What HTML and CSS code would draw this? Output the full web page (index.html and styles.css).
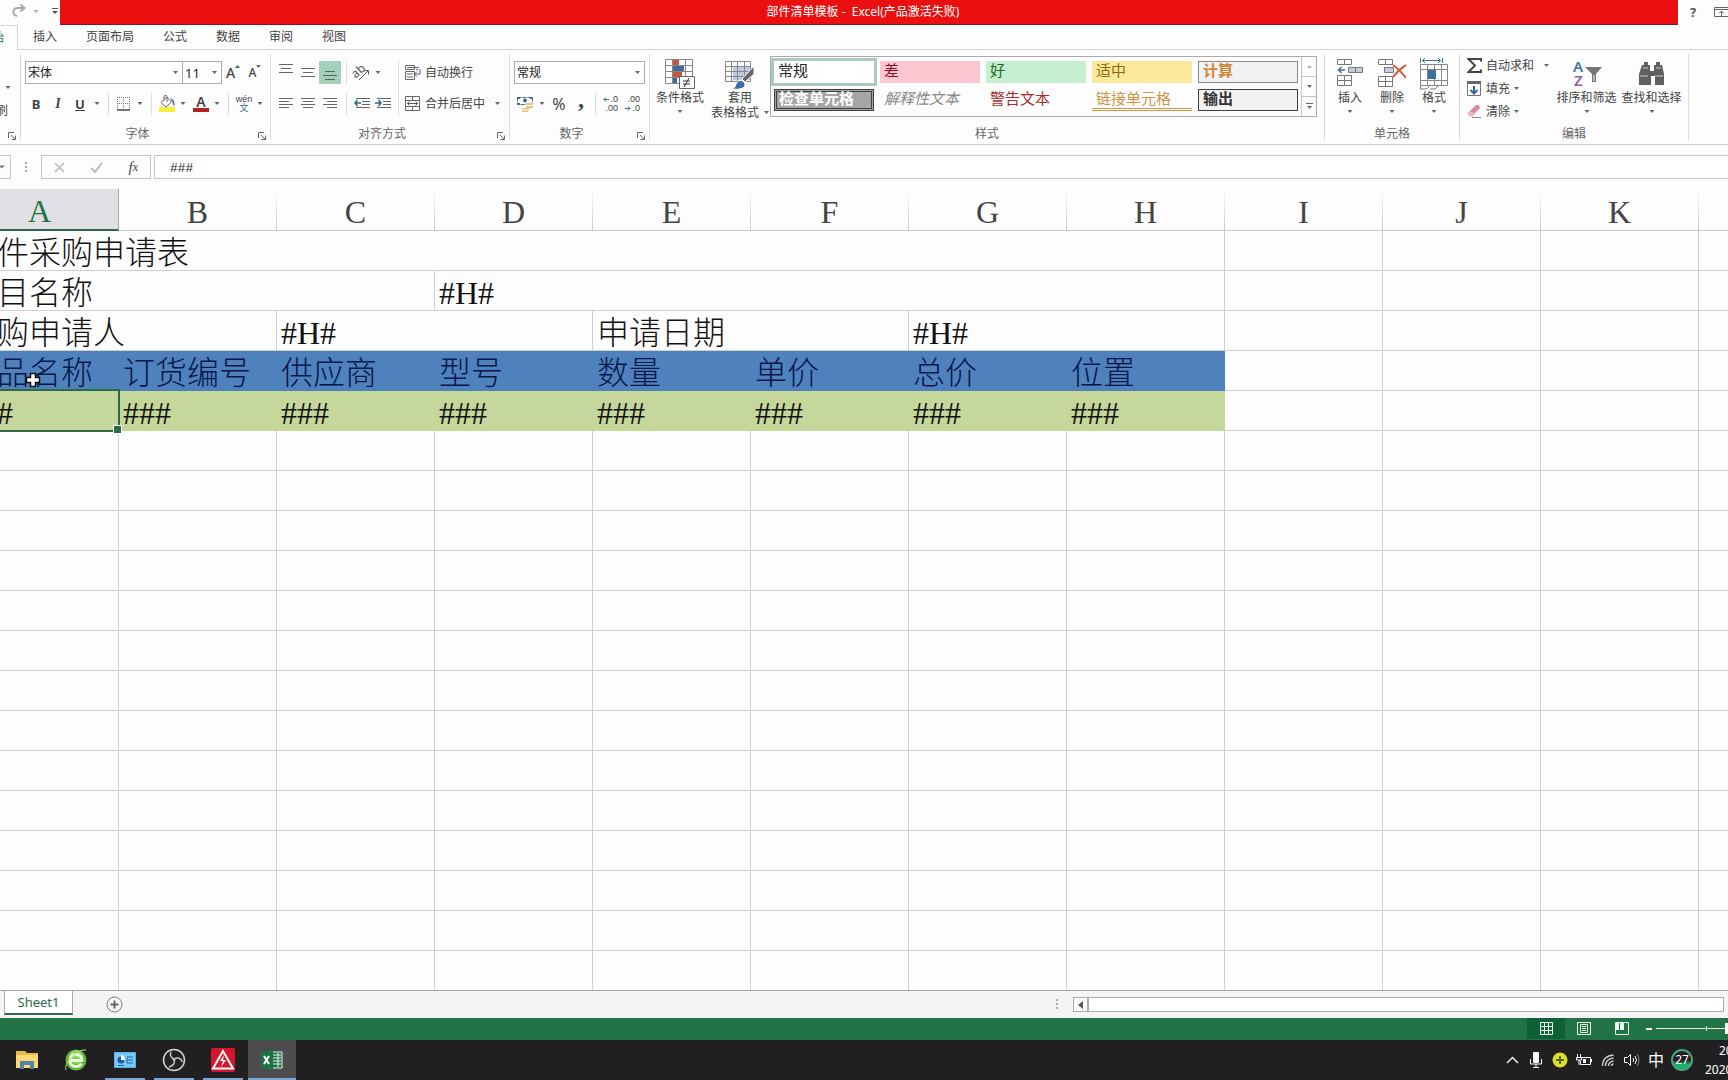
FILE: index.html
```html
<!DOCTYPE html>
<html lang="zh-CN">
<head>
<meta charset="utf-8">
<title>部件清单模板 - Excel</title>
<link rel="stylesheet" href="styles.css">
</head>
<body>
<svg class="defs" aria-hidden="true">
  <symbol id="caret" viewBox="0 0 5 3"><path d="M0 0h5L2.500 3z" fill="#666"/></symbol>
  <symbol id="launch" viewBox="0 0 8 8"><path d="M.5 6V.5H6M3 3l4 4M7.500 3.500v4h-4" fill="none" stroke="#666"/></symbol>
</svg>

<header class="titlebar">
  <div class="quick">
    <button class="plain" aria-label="恢复"><svg width="14" height="14" viewBox="0 0 14 14"><path d="M5 12C0 11 0 4 6 4h6M8.500 0.500L12.500 4L8.500 7.500" fill="none" stroke="#aaa" stroke-width="2"/></svg></button>
    <svg class="caret pale"><use href="#caret"/></svg>
    <button class="plain" aria-label="自定义快速访问工具栏"><svg width="6" height="6" viewBox="0 0 6 6"><path d="M0 .5h6" stroke="#555"/><path d="M0 3h6L3 6z" fill="#555"/></svg></button>
  </div>
  <h1 class="title">部件清单模板 -&nbsp; Excel(产品激活失败)</h1>
  <div class="window-tools">
    <button class="plain help" aria-label="帮助">?</button>
    <button class="plain" aria-label="功能区显示选项"><svg width="15" height="10" viewBox="0 0 15 10"><path d="M.5.5h14v9H.5zM.5 2.500h14M7.500 9V4M5 6.500L7.500 4L10 6.500" fill="none" stroke="#666"/></svg></button>
  </div>
</header>

<nav class="tabs">
  <a href="#home" class="tab current">开始</a>
  <a href="#insert" class="tab">插入</a>
  <a href="#layout" class="tab">页面布局</a>
  <a href="#formula" class="tab">公式</a>
  <a href="#data" class="tab">数据</a>
  <a href="#review" class="tab">审阅</a>
  <a href="#view" class="tab">视图</a>
</nav>

<section class="ribbon" aria-label="开始">
  <div class="group g-clip">
    <div class="clip-body"><svg class="caret"><use href="#caret"/></svg><button class="plain brush">格式刷</button></div>
    <div class="foot"><button class="plain launcher" aria-label="剪贴板选项"><svg width="8" height="8"><use href="#launch"/></svg></button></div>
  </div>

  <div class="group g-font">
    <div class="body col">
      <div class="row">
        <select class="combo c-font" aria-label="字体"><option>宋体</option></select>
        <select class="combo c-size" aria-label="字号"><option>11</option></select>
        <button class="tool wide big-a" aria-label="增大字号">A<svg width="5" height="3" viewBox="0 0 5 3"><path d="M0 3h5L2.500 0z" fill="#46637c"/></svg></button>
        <button class="tool wide small-a" aria-label="减小字号">A<svg width="5" height="3"><use href="#caret"/></svg></button>
      </div>
      <div class="row">
        <button class="tool b">B</button><button class="tool i">I</button><button class="tool u">U</button><svg class="caret"><use href="#caret"/></svg>
        <span class="sep"></span>
        <button class="tool slim" aria-label="边框"><svg width="14" height="14" viewBox="0 0 14 14"><path d="M.5 0v13M6.500 0v13M12.500 0v13M0 .5h13M0 6.500h13" stroke="#777" stroke-dasharray="1 1" fill="none"/><path d="M0 13h13" stroke="#444" stroke-width="1.500"/></svg></button><svg class="caret"><use href="#caret"/></svg>
        <span class="sep"></span>
        <button class="tool slim" aria-label="填充颜色"><svg width="18" height="17" viewBox="0 0 18 17"><path d="M1 12h16v5H1z" fill="#f8ee3e"/><path d="M3 7.500L8.500 2L13.500 7L8 12z" fill="#fff" stroke="#666"/><path d="M6 6V2q0-2 2-1.500T9 4v3" fill="none" stroke="#666"/><path d="M12 3q5 1 4.500 8q-2-1-2-4z" fill="#4b6d92"/></svg></button><svg class="caret"><use href="#caret"/></svg>
        <button class="tool slim after font-color" aria-label="字体颜色">A</button><svg class="caret"><use href="#caret"/></svg>
        <span class="sep"></span>
        <button class="tool slim wen" aria-label="拼音"><span>wén</span><span class="blue">文</span></button><svg class="caret"><use href="#caret"/></svg>
      </div>
    </div>
    <div class="foot"><span class="name">字体</span><button class="plain launcher" aria-label="字体选项"><svg width="8" height="8"><use href="#launch"/></svg></button></div>
  </div>

  <div class="group g-align">
    <div class="body">
      <div class="col align-left">
        <div class="row">
          <button class="tool top" aria-label="顶端对齐"><svg width="14" height="9"><path d="M0 .5h14M2 4.500h10M0 8.500h14" stroke="#666"/></svg></button>
          <button class="tool" aria-label="垂直居中"><svg width="14" height="9"><path d="M0 .5h14M2 4.500h10M0 8.500h14" stroke="#666"/></svg></button>
          <button class="tool bottom on" aria-label="底端对齐"><svg width="14" height="9"><path d="M2 .5h10M0 4.500h14M2 8.500h10" stroke="#4c6b5c"/></svg></button>
          <span class="sep"></span>
          <button class="tool slim" aria-label="方向"><svg class="spill" width="18" height="16" viewBox="0 0 18 16"><text x="0" y="11" font-size="12" font-family="Noto Sans" fill="#555" transform="rotate(-42 5 9)">ab</text><path d="M6 15L15 6M11.500 5.500H15.500V9.500" fill="none" stroke="#555"/></svg></button><svg class="caret"><use href="#caret"/></svg>
        </div>
        <div class="row">
          <button class="tool" aria-label="左对齐"><svg width="14" height="11"><path d="M0 .5h14M0 3.500h10M0 6.500h14M0 9.500h10" stroke="#666"/></svg></button>
          <button class="tool" aria-label="居中"><svg width="14" height="11"><path d="M0 .5h14M2 3.500h10M0 6.500h14M2 9.500h10" stroke="#666"/></svg></button>
          <button class="tool" aria-label="右对齐"><svg width="14" height="11"><path d="M0 .5h14M4 3.500h10M0 6.500h14M4 9.500h10" stroke="#666"/></svg></button>
          <span class="sep"></span>
          <button class="tool slim" aria-label="减少缩进量"><svg width="16" height="11"><path d="M2 .5h14M8 3.500h8M8 6.500h8M2 9.500h14" stroke="#666"/><path d="M7 5H1M3.500 2L1 5l2.500 3" fill="none" stroke="#2f6797" stroke-width="1.500"/></svg></button>
          <button class="tool" aria-label="增加缩进量"><svg width="16" height="11"><path d="M2 .5h14M8 3.500h8M8 6.500h8M2 9.500h14" stroke="#666"/><path d="M0 5h6M3.500 2L6 5L3.500 8" fill="none" stroke="#2f6797" stroke-width="1.500"/></svg></button>
        </div>
      </div>
      <div class="col align-right">
        <button class="text-tool"><svg width="16" height="16" viewBox="0 0 16 16"><path d="M.5.500h9v4h-9zM.5 6.500h9v8h-9zM2 9h6M2 12h6M2 2.500h12M11 4.500h2" fill="none" stroke="#666"/><path d="M15 4v5h-5M12 6.500L9.500 9l2.500 2.500" fill="none" stroke="#3f6b90"/></svg>自动换行</button>
        <button class="text-tool"><svg width="16" height="16" viewBox="0 0 16 16"><path d="M.5.5h14v14H.5zM.5 4.500h14M.5 10.500h14M7.500.5v4M7.500 10.500v4" fill="none" stroke="#666"/><path d="M2 7.500h11M4.500 5.500l-2 2l2 2M10.500 5.500l2 2l-2 2" fill="none" stroke="#555"/></svg>合并后居中<svg class="caret push"><use href="#caret"/></svg></button>
      </div>
    </div>
    <div class="foot"><span class="name">对齐方式</span><button class="plain launcher" aria-label="对齐选项"><svg width="8" height="8"><use href="#launch"/></svg></button></div>
  </div>

  <div class="group g-num">
    <div class="body col">
      <div class="row"><select class="combo c-num" aria-label="数字格式"><option>常规</option></select></div>
      <div class="row">
        <button class="tool" aria-label="会计数字格式"><svg width="17" height="16" viewBox="0 0 17 16"><path d="M.5 1.500h15v7H.5z" fill="#fff" stroke="#3e6c96" stroke-dasharray="4 1"/><path d="M0 1h3v2H0zM13 1h3v2h-3zM0 7h3v2H0z" fill="#3e6c96"/><circle cx="8" cy="4.500" r="2" fill="#3e6c96"/><path d="M9 7h7v2H9zM9 10h7v2H9zM5 12h7v1.500H5zM5 14.500h6V16H5z" fill="#e4c478"/></svg></button><svg class="caret"><use href="#caret"/></svg>
        <button class="tool pct">%</button>
        <button class="tool comma" aria-label="千位分隔">,</button>
        <span class="sep near"></span>
        <button class="tool dec" aria-label="增加小数位数"><span><svg width="6" height="5" viewBox="0 0 6 5"><path d="M6 2.500H1M3 .5L1 2.500l2 2" fill="none" stroke="#2f6797"/></svg>.0</span><span>.00</span></button>
        <button class="tool dec" aria-label="减少小数位数"><span>.00</span><span><svg width="6" height="5" viewBox="0 0 6 5"><path d="M0 2.500h5M3 .5l2 2l-2 2" fill="none" stroke="#2f6797"/></svg>.0</span></button>
      </div>
    </div>
    <div class="foot"><span class="name">数字</span><button class="plain launcher" aria-label="数字选项"><svg width="8" height="8"><use href="#launch"/></svg></button></div>
  </div>

  <div class="group g-style">
    <div class="styles">
      <button class="large w60"><svg width="30" height="30" viewBox="0 0 30 30"><path d="M.5.5h27v24H.5zM.5 6.500h27M.5 12.500h27M.5 18.500h27M7.500.5v24M20.500.5v24" fill="#fff" stroke="#888"/><path d="M8 1h6v5H8zM8 13h9v5H8z" fill="#c9543f"/><path d="M8 7h11v5H8zM8 19h4v5H8z" fill="#44699b"/><path d="M14.500 17.500h15v12h-15z" fill="#fff" stroke="#666"/><path d="M18 22h7M18 25h7M24 19l-5 9" stroke="#333"/></svg><span>条件格式</span><svg class="caret"><use href="#caret"/></svg></button>
      <button class="large w60"><svg width="30" height="30" viewBox="0 0 30 30"><path d="M8 8h18v13H8z" fill="#bccbe3"/><path d="M.5 2.500h25v20H.5zM.5 7.500h25M.5 12.500h25M.5 17.500h25M6.500 2.500v20M12.500 2.500v20M19.500 2.500v20" fill="none" stroke="#888"/><path d="M29 7v8L20 23l-3-3z" fill="#666" stroke="#fff"/><path d="M7 30q4-2 4-5q2-5 7-3q4 4 0 7q-4 2-11 1z" fill="#3b6da3" stroke="#fff"/></svg><span>套用</span><span>表格格式<svg class="caret"><use href="#caret"/></svg></span></button>
      <div class="gallery">
        <div class="swatches">
          <button class="sw s-normal">常规</button><button class="sw s-bad">差</button><button class="sw s-good">好</button><button class="sw s-mid">适中</button><button class="sw s-calc">计算</button>
          <button class="sw s-check">检查单元格</button><button class="sw s-note">解释性文本</button><button class="sw s-warn">警告文本</button><button class="sw s-link">链接单元格</button><button class="sw s-out">输出</button>
        </div>
        <div class="scroller">
          <button aria-label="上一行"><svg class="pale" width="5" height="3" viewBox="0 0 5 3"><path d="M0 3h5L2.500 0z" fill="#666"/></svg></button>
          <button aria-label="下一行"><svg width="5" height="3"><use href="#caret"/></svg></button>
          <button aria-label="其他"><svg width="7" height="7" viewBox="0 0 7 7"><path d="M0 .5h7" stroke="#666"/><path d="M1 3h5L3.500 6z" fill="#666"/></svg></button>
        </div>
      </div>
    </div>
    <div class="foot"><span>样式</span></div>
  </div>

  <div class="group g-cells">
    <div class="styles">
      <button class="large w42"><svg width="28" height="30" viewBox="0 0 28 30"><path d="M1.500.5h14v5h-14zM8.500.5v5M1.500 16.500h14v10h-14zM8.500 16.500v10M1.500 21.500h14" fill="#fff" stroke="#777"/><path d="M12.500 8.500h14v5h-14zM19.500 8.500v5" fill="#c5cbe0" stroke="#777"/><path d="M9 11H3M5.500 8L2.500 11l3 3" fill="none" stroke="#3b6f9c" stroke-width="1.500"/></svg><span>插入</span><svg class="caret"><use href="#caret"/></svg></button>
      <button class="large w42"><svg width="28" height="30" viewBox="0 0 28 30"><path d="M.5.5h14v5H.5zM7.500.5v5M.5 17.500h14v10H.5zM7.500 17.500v10M.5 22.500h14" fill="#fff" stroke="#777"/><path d="M6.500 8.500h9v5h-9z" fill="#c5cbe0" stroke="#777"/><path d="M15 6q6 4 13 13M28 6Q20 11 15 18" fill="none" stroke="#d2593d" stroke-width="2"/></svg><span>删除</span><svg class="caret"><use href="#caret"/></svg></button>
      <button class="large w42"><svg width="28" height="32" viewBox="0 0 28 32"><path d="M.5 0v5M22.500 0v5M2 2.500h19M5 0L2.500 2.500L5 5M18 0l2.500 2.500L18 5" fill="none" stroke="#3b6f9c"/><path d="M.5 6.500h27v21H.5zM.5 11.500h27M.5 22.500h27M7.500 6.500v21M14.500 6.500v21M21.500 6.500v21" fill="#fff" stroke="#888"/><path d="M8 12h8v9H8z" fill="#3b6f9c"/><path d="M.5 28v3h5q2 0 4-3M10 31h4q2 0 4-3" fill="none" stroke="#777"/></svg><span>格式</span><svg class="caret"><use href="#caret"/></svg></button>
    </div>
    <div class="foot"><span>单元格</span></div>
  </div>

  <div class="group g-edit">
    <div class="styles">
      <div class="edit-list">
        <button class="text-tool"><svg width="15" height="15" viewBox="0 0 15 15"><path d="M14 3.500V1H1.500l6.500 6.500L1.500 14H14v-2.500" fill="none" stroke="#444" stroke-width="2"/></svg>自动求和<svg class="caret push"><use href="#caret"/></svg></button>
        <button class="text-tool"><svg width="15" height="15" viewBox="0 0 15 15"><path d="M.5.5h13v14H.5z" fill="#fff" stroke="#777"/><path d="M0 0h14v3H0z" fill="#666"/><path d="M7 5v7M3.500 9L7 12.500L10.500 9" fill="none" stroke="#2f6797" stroke-width="2"/></svg>填充<svg class="caret"><use href="#caret"/></svg></button>
        <button class="text-tool"><svg width="15" height="15" viewBox="0 0 15 15"><path d="M1 9l8-8h3l1 3l-8 8H2z" fill="#d98a9c"/><path d="M3 7l5 3l-3 3L1 11z" fill="#efb8c3"/><path d="M5 13.500h9" stroke="#888"/></svg>清除<svg class="caret"><use href="#caret"/></svg></button>
      </div>
      <button class="large w65"><svg width="30" height="30" viewBox="0 0 30 30"><text x="1" y="13" font-size="15" font-weight="600" font-family="Noto Sans" fill="#3b76a8">A</text><text x="2" y="27" font-size="15" font-weight="600" font-family="Noto Sans" fill="#8d5fa3">Z</text><path d="M13 8h17l-6 7v8h-4v-8z" fill="#777"/><path d="M22 16v6" stroke="#fff"/></svg><span>排序和筛选</span><svg class="caret"><use href="#caret"/></svg></button>
      <button class="large w65"><svg width="28" height="30" viewBox="0 0 28 30"><path d="M6 3h4v3h2v6h4V6h2V3h4v3h2l2 9v11h-9v-9h-4v9H1V15l3-9h2z" fill="#5e5e5e"/><path d="M5 9h5M18 9h5M2 17h8M17 17h8" stroke="#ccc"/></svg><span>查找和选择</span><svg class="caret"><use href="#caret"/></svg></button>
    </div>
    <div class="foot"><span>编辑</span></div>
  </div>
</section>

<section class="formula-bar">
  <button class="name-box" aria-label="名称框"><svg width="5" height="4" viewBox="0 0 5 3"><path d="M0 0h5L1 3z" fill="#666"/></svg></button>
  <span class="dots"></span>
  <div class="fx-box">
    <button class="plain" aria-label="取消"><svg width="11" height="11"><path d="M1 1l9 9M10 1L1 10" stroke="#bbb" stroke-width="1.500"/></svg></button>
    <button class="plain" aria-label="输入"><svg width="13" height="11"><path d="M1 6l4 4l7-9" fill="none" stroke="#bbb" stroke-width="2"/></svg></button>
    <button class="plain fx" aria-label="插入函数">f<small>x</small></button>
  </div>
  <input class="formula" aria-label="编辑栏" value="###">
</section>

<main class="sheet">
  <table class="grid">
    <thead>
      <tr><th class="active">A</th><th>B</th><th>C</th><th>D</th><th>E</th><th>F</th><th>G</th><th>H</th><th>I</th><th>J</th><th>K</th><th></th></tr>
    </thead>
    <tbody>
      <tr><td colspan="8">部件采购申请表</td><td></td><td></td><td></td><td></td></tr>
      <tr><td colspan="3">项目名称</td><td colspan="5">#H#</td><td></td><td></td><td></td><td></td></tr>
      <tr><td colspan="2">采购申请人</td><td colspan="2">#H#</td><td colspan="2">申请日期</td><td colspan="2">#H#</td><td></td><td></td><td></td><td></td></tr>
      <tr class="heads"><td>产品名称</td><td>订货编号</td><td>供应商</td><td>型号</td><td>数量</td><td>单价</td><td>总价</td><td>位置</td><td></td><td></td><td></td><td></td></tr>
      <tr class="marks"><td class="picked">###</td><td>###</td><td>###</td><td>###</td><td>###</td><td>###</td><td>###</td><td>###</td><td></td><td></td><td></td><td></td></tr>
      <tr><td></td><td></td><td></td><td></td><td></td><td></td><td></td><td></td><td></td><td></td><td></td><td></td></tr>
      <tr><td></td><td></td><td></td><td></td><td></td><td></td><td></td><td></td><td></td><td></td><td></td><td></td></tr>
      <tr><td></td><td></td><td></td><td></td><td></td><td></td><td></td><td></td><td></td><td></td><td></td><td></td></tr>
      <tr><td></td><td></td><td></td><td></td><td></td><td></td><td></td><td></td><td></td><td></td><td></td><td></td></tr>
      <tr><td></td><td></td><td></td><td></td><td></td><td></td><td></td><td></td><td></td><td></td><td></td><td></td></tr>
      <tr><td></td><td></td><td></td><td></td><td></td><td></td><td></td><td></td><td></td><td></td><td></td><td></td></tr>
      <tr><td></td><td></td><td></td><td></td><td></td><td></td><td></td><td></td><td></td><td></td><td></td><td></td></tr>
      <tr><td></td><td></td><td></td><td></td><td></td><td></td><td></td><td></td><td></td><td></td><td></td><td></td></tr>
      <tr><td></td><td></td><td></td><td></td><td></td><td></td><td></td><td></td><td></td><td></td><td></td><td></td></tr>
      <tr><td></td><td></td><td></td><td></td><td></td><td></td><td></td><td></td><td></td><td></td><td></td><td></td></tr>
      <tr><td></td><td></td><td></td><td></td><td></td><td></td><td></td><td></td><td></td><td></td><td></td><td></td></tr>
      <tr><td></td><td></td><td></td><td></td><td></td><td></td><td></td><td></td><td></td><td></td><td></td><td></td></tr>
      <tr><td></td><td></td><td></td><td></td><td></td><td></td><td></td><td></td><td></td><td></td><td></td><td></td></tr>
      <tr><td></td><td></td><td></td><td></td><td></td><td></td><td></td><td></td><td></td><td></td><td></td><td></td></tr>
    </tbody>
  </table>
  <svg class="cursor" width="16" height="16" viewBox="0 0 16 16"><path d="M5.500 1.500h5v4h4v5h-4v4h-5v-4h-4v-5h4z" fill="#fff" stroke="#111" stroke-width="1.500"/></svg>
</main>

<div class="sheet-bar">
  <button class="sheet-tab">Sheet1</button>
  <button class="plain add" aria-label="新工作表"><svg width="17" height="17" viewBox="0 0 17 17"><circle cx="8.500" cy="8.500" r="7.500" fill="none" stroke="#777"/><path d="M8.500 4.500v8M4.500 8.500h8" stroke="#666" stroke-width="2"/></svg></button>
  <span class="dots"></span>
  <div class="hscroll"><button aria-label="向左滚动"><svg width="5" height="8"><path d="M5 0v8L0 4z" fill="#555"/></svg></button></div>
</div>

<div class="status">
  <button class="view on" aria-label="普通"><svg width="13" height="13" viewBox="0 0 13 13"><path d="M.5.5h12v12H.5zM.5 4.500h12M.5 8.500h12M4.500.5v12M8.500.5v12" fill="none" stroke="#e8f5ec"/></svg></button>
  <button class="view" aria-label="页面布局"><svg width="14" height="13" viewBox="0 0 14 13"><path d="M.5.5h13v12H.5zM3.500 2.500h7v8h-7zM5 4.500h4M5 6.500h4M5 8.500h4" fill="none" stroke="#e8f5ec"/></svg></button>
  <button class="view" aria-label="分页预览"><svg width="14" height="13" viewBox="0 0 14 13"><path d="M.5.5h13v12H.5z" fill="none" stroke="#e8f5ec"/><path d="M1 1h3v7H1zM5 1h4v7H5z" fill="#e8f5ec"/></svg></button>
  <div class="zoom"><button class="plain minus" aria-label="缩小"></button><input type="range" aria-label="显示比例" min="0" max="100" value="73"></div>
</div>

<footer class="taskbar">
  <button class="app" aria-label="文件资源管理器"><svg width="22" height="20" viewBox="0 0 22 20"><path d="M0 1h9l2 2h11v15H0z" fill="#e9b94c"/><path d="M0 5h22v13H0z" fill="#fbd974"/><path d="M4 19v-8h14v8h-4v-4H8v4z" fill="#4f86a8"/></svg></button>
  <button class="app" aria-label="浏览器"><svg width="24" height="24" viewBox="0 0 24 24"><circle cx="12" cy="12" r="10.500" fill="#5fb336"/><circle cx="12" cy="9" r="7" fill="#8bd25a"/><path d="M6.500 12.500H18q0-6-6-6t-6 6t6 6q4 0 5.500-3" fill="none" stroke="#e9f8dc" stroke-width="3"/><path d="M2 22Q0 17 8 9T22 2" fill="none" stroke="#b7e26f"/></svg></button>
  <button class="app open" aria-label="控制面板"><svg width="22" height="16" viewBox="0 0 22 16"><path d="M0 0h22v16H0z" fill="#58b0e8"/><path d="M1 1h20v14H1z" fill="#7cc6f3"/><circle cx="7" cy="8" r="3.500" fill="#1b5f9b"/><path d="M7 8V3a5 5 0 0 1 4 5z" fill="#fff"/><path d="M13 5h6M13 8h6M13 11h6M13 5v6M4 13.500h6" stroke="#1f6ea8"/></svg></button>
  <button class="app open" aria-label="OBS"><svg width="24" height="24" viewBox="0 0 24 24"><circle cx="12" cy="12" r="10.500" fill="#242225" stroke="#d5d3d6" stroke-width="1.500"/><path d="M12 11Q7 9 9 3.500M12 11q6-3 8.500 3M12 11q2 6-5 8" fill="none" stroke="#c4c2c5" stroke-width="1.500"/><circle cx="12" cy="11.500" r="1.500" fill="#c4c2c5"/></svg></button>
  <button class="app open" aria-label="电气设计"><svg width="24" height="24" viewBox="0 0 24 24"><rect width="24" height="24" rx="2" fill="#d5152c"/><path d="M12 3L22 20.500H2z" fill="none" stroke="#fff" stroke-width="2"/><path d="M13 7l-4 6h3l-2 6l5-7h-3z" fill="#fff"/></svg></button>
  <button class="app open active" aria-label="Excel"><svg width="22" height="20" viewBox="0 0 22 20"><path d="M11 2h10v16H11z" fill="#1e7145" stroke="#e8f5ec"/><path d="M12 5h8M12 8h8M12 11h8M12 14h8M17 3v14" stroke="#e8f5ec"/><path d="M0 2l12-2v20L0 18z" fill="#1e7145"/><path d="M3 6l5 8M8 6l-5 8" stroke="#fff" stroke-width="2"/></svg></button>
  <div class="tray">
    <button class="plain" aria-label="显示隐藏的图标"><svg width="13" height="8"><path d="M1 7l5.500-5.500L12 7" fill="none" stroke="#eee" stroke-width="1.500"/></svg></button>
    <svg height="16" viewBox="0 0 12 16"><rect x="3" width="6" height="11" rx="1" fill="#fff"/><path d="M.5 7v5h11V7M6 12v3M3 15.500h6" fill="none" stroke="#fff"/></svg>
    <svg height="16" viewBox="0 0 16 16"><circle cx="8" cy="8" r="7.500" fill="#dede2c"/><path d="M8 4v8M4 8h8" stroke="#4d6b1a" stroke-width="2"/></svg>
    <svg height="12" viewBox="0 0 16 12"><path d="M5 3.500h9.500v7H4.500V7M15.500 5v3M1.500 0v3M4.500 0v3M.5 3.500h5V6h-5zM3 6v5" fill="none" stroke="#fff"/><path d="M7 5h3v4H7z" fill="#fff"/></svg>
    <svg height="13" viewBox="0 0 13 13"><path d="M1 12Q1 2 12 1M4 12q0-7 8-8M7 12q0-4 5-5M10 12q0-2 2-2" fill="none" stroke="#ccc" stroke-width="1.300"/></svg>
    <svg height="14" viewBox="0 0 16 14"><path d="M.5 4.500h3l3-3v11l-3-3h-3zM9 5q1.500 2 0 4M11 3q3 4 0 8" fill="none" stroke="#fff"/><path d="M13 1q4 6 0 12" fill="none" stroke="#888"/></svg>
    <span class="ime">中</span>
  </div>
  <span class="badge">27</span>
  <div class="clock"><span class="hour">20</span><span>2020</span></div>
</footer>
</body>
</html>
```
FILE: styles.css
```css
* { box-sizing: border-box; }

body {
  margin: 0;
  height: 100vh;
  overflow: hidden;
  display: flex;
  flex-direction: column;
  background: #fdfdfd;
  color: #444;
  font: 12px/16px "Noto Sans", "Noto Sans CJK SC", sans-serif;
}
button, input, select { font: inherit; color: inherit; border-radius: 0; }
button { padding: 0; border: 0; background: none; white-space: nowrap; }
svg { display: block; flex: none; }
.defs { position: absolute; width: 0; height: 0; }
.plain { display: flex; align-items: center; justify-content: center; }
.caret { width: 12px; height: 3px; }
.pale { opacity: .5; }
.spill { overflow: visible; }

/* Title bar */
.titlebar { display: flex; height: 25px; flex: none; }
.quick { width: 60px; padding: 0 2px 3px 12px; display: flex; align-items: center; gap: 4px; }
.quick .plain:last-child { margin-left: auto; }
.title {
  flex: 1;
  margin: 0;
  padding-right: 12px;
  border-bottom: 1px solid #7d1c18;
  background: #eb0f10;
  color: #fff;
  font-size: 12px;
  font-weight: 400;
  line-height: 23px;
  text-align: center;
}
.window-tools { width: 50px; padding: 0 0 2px 12px; display: flex; align-items: center; gap: 18px; overflow: hidden; }
.help { font-size: 13px; font-weight: 700; color: #555; }

/* Ribbon tabs */
.tabs { display: flex; flex: none; gap: 29px; height: 25px; border-bottom: 1px solid #d4d4d4; }
.tab { height: 24px; color: #444; line-height: 23px; text-decoration: none; white-space: nowrap; }
.current {
  width: 18px;
  height: 25px;
  margin-right: -14px;
  padding-right: 13px;
  display: flex;
  justify-content: flex-end;
  border: 1px solid #d4d4d4;
  border-width: 1px 1px 0 0;
  background: #fdfdfd;
  color: #217346;
}

/* Ribbon */
.ribbon { display: flex; flex: none; height: 95px; border-bottom: 1px solid #d0d0d0; }
.group {
  position: relative;
  display: flex;
  flex: none;
  flex-direction: column;
  border-right: 1px solid #dcdcdc;
  height: 86px;
  margin-top: 4px;
}
.g-clip { width: 21px; }
.g-font { width: 250px; }
.g-align { width: 239px; }
.g-num { width: 140px; }
.g-style { width: 675px; }
.g-cells { width: 135px; }
.g-edit { width: 229px; }
.body { display: flex; padding: 7px 4px 0; }
.col { display: flex; flex-direction: column; gap: 8px; }
.row { display: flex; align-items: center; height: 23px; }
.foot { margin-top: auto; height: 12px; display: flex; align-items: center; justify-content: center; color: #666; }
.name { margin-right: 16px; }
.launcher { position: absolute; right: 4px; bottom: 0; }
.clip-body { display: flex; flex-direction: column; align-items: flex-end; gap: 14px; padding: 32px 6px 0 0; overflow: hidden; }
.brush { align-self: flex-end; padding-right: 6px; }

.combo {
  flex: none;
  height: 23px;
  padding: 0 2px;
  border: 1px solid #ababab;
  appearance: none;
  color: #222;
  background: #fff url("data:image/svg+xml,%3Csvg xmlns='http://www.w3.org/2000/svg' width='5' height='3'%3E%3Cpath d='M0 0h5L2.500 3z' fill='%23666'/%3E%3C/svg%3E") no-repeat right 4px center;
}
.c-font { width: 158px; }
.c-size { width: 40px; margin-left: -1px; font-size: 13px; }
.c-num { width: 131px; }

.tool { width: 22px; height: 23px; display: flex; flex: none; align-items: center; justify-content: center; }
.wide svg { align-self: flex-start; margin-top: 4px; }
.slim { width: 20px; }
.after { margin-left: 2px; }
.on { background: #a3cfbb; }
.top { align-items: flex-start; padding-top: 3px; }
.bottom { align-items: flex-end; padding-bottom: 4px; }
.sep { width: 1px; height: 22px; margin: 0 5px; background: #dcdcdc; }
.near { margin: 0 3px; }
.big-a { font-size: 14px; font-weight: 500; }
.small-a { font-size: 12px; font-weight: 500; }
.b { font-weight: 700; font-size: 13px; }
.i { font: italic 700 14px "Liberation Serif", serif; }
.u { font-weight: 700; font-size: 13px; text-decoration: underline; }
.font-color { height: 17px; border-bottom: 4px solid #b3201f; width: 16px; margin: 0 2px 0 4px; font-size: 14px; font-weight: 600; line-height: 13px; }
.wen { flex-direction: column; font: 9px/9px "Liberation Sans", "Noto Sans CJK SC", sans-serif; }
.blue { color: #2f6797; }
.pct { font-size: 16px; }
.comma { font: 700 24px/12px "Liberation Serif", serif; padding-bottom: 10px; }
.dec { flex-direction: column; align-items: flex-end; padding-right: 3px; font: 9px/9px "Liberation Sans", sans-serif; }
.dec span { display: flex; align-items: center; gap: 1px; }
.align-left { width: 124px; border-right: 1px solid #dcdcdc; }
.align-right { padding-left: 6px; flex: 1; }
.text-tool { display: flex; align-items: center; gap: 4px; height: 23px; }
.text-tool .caret { width: 5px; }
.text-tool .push { margin-left: 6px; }

.styles { display: flex; align-items: flex-start; }
.large { display: flex; flex-direction: column; align-items: center; padding-top: 4px; line-height: 15px; }
.large > svg:first-child { height: 32px; }
.large > .caret { margin-top: 5px; }
.large span { display: flex; align-items: center; }
.large span .caret { width: 5px; margin-left: 5px; }
.w60 { width: 60px; }
.w42 { width: 42px; }
.w65 { width: 65px; }
.g-cells .styles { padding-left: 4px; }
.g-edit .styles { padding-left: 7px; }
.gallery { display: flex; margin-top: 2px; height: 61px; border: 1px solid #ababab; }
.swatches { display: grid; grid-template-columns: repeat(5, 100px); grid-auto-rows: 22px; gap: 6px; padding: 4px 3px 4px; }
.sw { display: flex; align-items: flex-start; padding: 0 4px; font-size: 15px; line-height: 19px; }
.s-normal { background: #fff; outline: 3px solid #a9cbbc; color: #222; }
.s-bad { background: #fbc6d0; color: #8c1020; }
.s-good { background: #c6eed0; color: #1a6a22; }
.s-mid { background: #fbe99b; color: #8f6a10; }
.s-calc { border: 1px solid #888; background: #f2f1f4; color: #d0862f; font-weight: 700; line-height: 17px; }
.s-check { border: 3px double #3f3f3f; background: #a5a5a5; color: #fff; font-weight: 700; line-height: 13px; padding: 0 2px; }
.s-note { color: #888; font-style: italic; }
.s-warn { color: #a72b2b; }
.s-link { border-bottom: 3px double #cf9545; color: #cf9545; }
.s-out { border: 1px solid #3f3f3f; background: #f2f2f2; color: #333; font-weight: 700; line-height: 17px; }
.scroller { display: flex; flex-direction: column; width: 15px; border-left: 1px solid #c4c4c4; }
.scroller button { flex: 1; display: flex; align-items: center; justify-content: center; }
.scroller button + button { border-top: 1px solid #c4c4c4; }
.edit-list { display: flex; flex-direction: column; width: 87px; }

/* Formula bar */
.formula-bar { display: flex; flex: none; height: 24px; margin: 10px 0; }
.name-box { width: 11px; border: 1px solid #c6c6c6; border-left: 0; }
.dots { width: 2px; height: 11px; align-self: center; background: repeating-linear-gradient(#aaa 0 2px, transparent 2px 4px); }
.formula-bar .dots { margin: 0 14px; }
.fx-box { display: flex; justify-content: space-between; width: 110px; padding: 0 12px; border: 1px solid #c6c6c6; }
.fx { font: italic 15px "Liberation Serif", serif; }
.fx small { font-size: 12px; }
.formula { flex: 1; min-width: 0; margin-left: 3px; padding: 2px 15px 0; border: 1px solid #c6c6c6; border-right: 0; background: #fff; font: 13px "Liberation Mono", monospace; color: #222; }

/* Worksheet */
.sheet { position: relative; flex: 1; min-height: 0; overflow: hidden; }
.grid {
  table-layout: fixed;
  width: 1896px;
  margin-left: -39px;
  border-spacing: 0;
  font: 32px/34px "Liberation Serif", "Noto Sans CJK SC", serif;
  font-weight: 300;
}
.grid th {
  height: 42px;
  padding: 4px 0 0;
  border-bottom: 1px solid #a6a6a6;
  border-right: 1px solid;
  border-image: linear-gradient(#fdfdfd, #c6c6c6) 1;
  font-weight: 400;
  color: #444;
}
.grid th.active { border-image: none; border-right-color: #a6a6a6; border-bottom: 2px solid #2c6a4a; background: #e1dfe3; color: #217346; }
.grid td {
  height: 40px;
  padding: 5px 0 0 4px;
  border: 1px solid #d0d0d0;
  border-width: 0 1px 1px 0;
  color: #111;
  white-space: nowrap;
}
.heads td:nth-child(-n+8) { border-color: #4f81bd; background: #4f81bd; color: #06174a; }
.marks td:nth-child(-n+8) { border-color: #c6d79b; background: #c6d79b; }
.picked { position: relative; }
.picked::before { content: ""; position: absolute; inset: -2px -2px -2px -1px; border: 2px solid #2c6a4a; }
.picked::after { content: ""; position: absolute; right: -4px; bottom: -4px; width: 7px; height: 7px; border: 1px solid #fff; background: #2c6a4a; }
.cursor { position: absolute; left: 25px; top: 183px; }

/* Sheet tabs */
.sheet-bar { display: flex; flex: none; align-items: center; height: 28px; border-top: 1px solid #a6a6a6; background: #f6f4f7; }
.sheet-tab { align-self: flex-start; width: 69px; height: 24px; margin-left: 4px; border: 1px solid #ababab; border-width: 0 1px 2px; border-bottom-color: #2c6a4a; background: #fff; color: #2c6a4a; font-size: 13px; }
.add { margin-left: 33px; }
.sheet-bar .dots { margin: 0 15px 0 auto; }
.hscroll { width: 651px; height: 15px; margin-right: 4px; border: 1px solid #ababab; background: #fff; }
.hscroll button { width: 15px; height: 13px; display: flex; align-items: center; justify-content: center; border-right: 2px solid #ababab; }

/* Status bar */
.status { display: flex; flex: none; justify-content: flex-end; height: 22px; padding-bottom: 1px; background: #217346; }
.view { width: 38px; display: flex; align-items: center; justify-content: center; }
.view.on { background: #0e6136; }
.zoom { display: flex; align-items: center; width: 87px; padding-left: 5px; overflow: hidden; }
.minus { flex: none; width: 6px; height: 2px; background: #fff; }
.zoom input {
  flex: none;
  width: 100px;
  height: 12px;
  margin: 0 0 0 4px;
  appearance: none;
  background: linear-gradient(#e8f5ec, #e8f5ec) center / 100% 1px no-repeat, linear-gradient(#e8f5ec, #e8f5ec) center / 1px 5px no-repeat;
}
.zoom input::-webkit-slider-thumb { appearance: none; width: 6px; height: 11px; background: #fff; }

/* Taskbar */
.taskbar { display: flex; flex: none; align-items: center; height: 40px; padding-left: 2px; background: #211f21; color: #fff; }
.app { display: flex; align-self: stretch; align-items: center; justify-content: center; width: 49px; padding: 0 4px; }
.open { background: linear-gradient(#7ba7d7, #7ba7d7) bottom / 40px 2px no-repeat; }
.app.active { width: 48px; margin-left: 1px; background: linear-gradient(#7ba7d7, #7ba7d7) bottom / 100% 2px no-repeat #4d4b4d; }
.tray { display: flex; align-items: center; margin-left: auto; }
.tray > * { width: 24px; }
.ime { font-size: 16px; text-align: center; }
.badge { width: 22px; height: 22px; margin: 0 12px 0 3px; border: 2px solid #4aa57c; border-radius: 50%; background: linear-gradient(#211f21 50%, #1fae66 75%); font-size: 12px; line-height: 18px; text-align: center; }
.clock { display: flex; flex-direction: column; gap: 3px; width: 23px; overflow: hidden; }
.hour { padding-left: 14px; }
```
